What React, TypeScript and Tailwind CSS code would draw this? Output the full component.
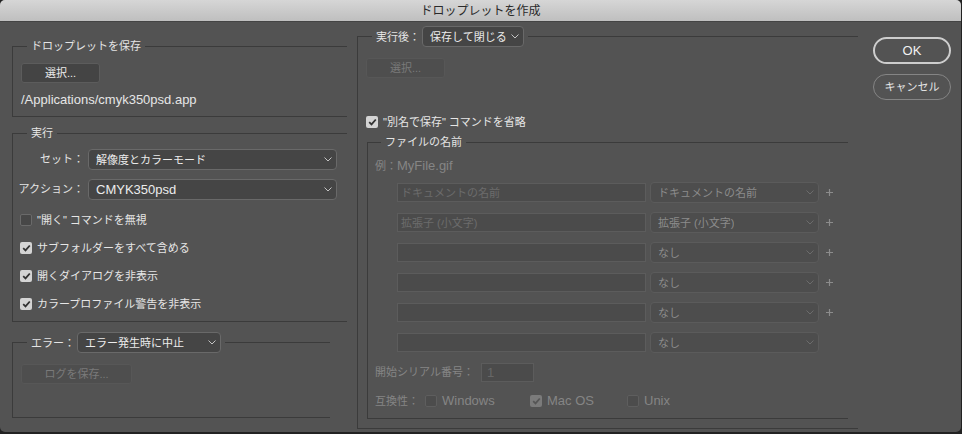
import type { ReactNode } from 'react';

// Latin text renders larger than the kana/kanji in this dialog
function L({ children }: { children: ReactNode }) {
  return <span className="text-[13px]">{children}</span>;
}

function Chevron({ dim }: { dim?: boolean }) {
  return (
    <svg width="8" height="5" viewBox="0 0 8 5" className={dim ? 'shrink-0 text-[#6c6c6c]' : 'shrink-0 text-[#c4c4c4]'}>
      <path d="M0.5 0.5L4 4L7.5 0.5" fill="none" stroke="currentColor" strokeWidth="1" />
    </svg>
  );
}

function Select({ children, className = '', dim }: { children: ReactNode; className?: string; dim?: boolean }) {
  return (
    <div
      className={`flex h-[21px] items-center justify-between gap-[4px] rounded-[4px] border pl-[7px] pr-[4px] leading-[16px] ${
        dim ? 'border-[#5b5b5b] bg-[#4d4d4d] text-[#8b8b8b]' : 'border-[#696969] bg-[#454545] text-[#ececec]'
      } ${className}`}
    >
      <span className="truncate whitespace-nowrap">{children}</span>
      <Chevron dim={dim} />
    </div>
  );
}

function Check({ checked, disabled }: { checked?: boolean; disabled?: boolean }) {
  let cls = 'border border-[#6a6a6a] bg-[#474747]';
  if (checked) cls = disabled ? 'bg-[#7b7b7b]' : 'bg-[#d4d4d4]';
  else if (disabled) cls = 'border border-[#5e5e5e] bg-[#4c4c4c]';
  return (
    <span className={`flex h-[12px] w-[12px] shrink-0 items-center justify-center rounded-[2px] ${cls}`}>
      {checked && (
        <svg width="9" height="8" viewBox="0 0 9 8">
          <path d="M1.2 4.2L3.5 6.4L7.8 1.5" fill="none" stroke={disabled ? '#565656' : '#333333'} strokeWidth="1.8" />
        </svg>
      )}
    </span>
  );
}

function CheckRow({ label, checked, disabled, className = '' }: { label: ReactNode; checked?: boolean; disabled?: boolean; className?: string }) {
  return (
    <div className={`flex h-[16px] items-center gap-[5px] whitespace-nowrap leading-[16px] ${disabled ? 'text-[#858585]' : 'text-[#e6e6e6]'} ${className}`}>
      <Check checked={checked} disabled={disabled} />
      <span>{label}</span>
    </div>
  );
}

function Group({ legend, className = '', legendClass = 'ml-[14px]', children }: { legend: ReactNode; className?: string; legendClass?: string; children: ReactNode }) {
  return (
    <fieldset className={`border-y border-l border-r-0 border-[#3b3b3b] ${className}`}>
      <legend className={`flex items-center whitespace-nowrap px-[4px] leading-[16px] text-[#e4e4e4] ${legendClass}`}>{legend}</legend>
      {children}
    </fieldset>
  );
}

function Button({ children, disabled, className = '' }: { children: ReactNode; disabled?: boolean; className?: string }) {
  return (
    <div
      className={`flex h-[20px] items-center justify-center rounded-[3px] border leading-[16px] ${
        disabled ? 'border-[#575757] bg-[#4e4e4e] text-[#7a7a7a]' : 'border-[#5c5c5c] bg-[#444444] text-[#ececec]'
      } ${className}`}
    >
      {children}
    </div>
  );
}

function Plus() {
  return (
    <svg width="7" height="7" viewBox="0 0 7 7" className="ml-[7px] text-[#8c8c8c]">
      <path d="M3.5 0V7M0 3.5H7" stroke="currentColor" strokeWidth="1.2" />
    </svg>
  );
}

const nameRows = [
  { input: 'ドキュメントの名前', select: 'ドキュメントの名前', plus: true },
  { input: '拡張子 (小文字)', select: '拡張子 (小文字)', plus: true },
  { input: '', select: 'なし', plus: true },
  { input: '', select: 'なし', plus: true },
  { input: '', select: 'なし', plus: true },
  { input: '', select: 'なし', plus: false },
];

export default function App() {
  return (
    <div className="h-[434px] w-[962px] bg-[#222222] font-['Liberation_Sans','Noto_Sans_CJK_JP',sans-serif] text-[11px]">
      <div className="flex h-[432px] w-[961px] flex-col overflow-hidden rounded-[5px] bg-[#535353]">
        <div className="flex h-[22px] shrink-0 items-center justify-center border-b border-[#444444] bg-gradient-to-b from-[#d6d6d6] to-[#bfbfbf] text-[12px] text-[#2a2a2a]">
          ドロップレットを作成
        </div>

        <div className="flex">
          {/* left column */}
          <div className="ml-[12px] w-[335px] shrink-0">
            <Group legend="ドロップレットを保存" className="mt-[16px]">
              <div className="pb-[8px] pl-[8px] pt-[9px]">
                <Button className="w-[79px]">選択...</Button>
                <div className="mt-[9px] leading-[16px] text-[#e6e6e6]">
                  <L>/Applications/cmyk350psd.app</L>
                </div>
              </div>
            </Group>

            <Group legend="実行" className="mt-[8px]">
              <div className="pb-[9px] pl-[5px] pr-[10px] pt-[8px]">
                <div className="flex items-center">
                  <span className="w-[66px] shrink-0 whitespace-nowrap text-right text-[#e4e4e4]">セット：</span>
                  <Select className="ml-[4px] flex-1">解像度とカラーモード</Select>
                </div>
                <div className="mt-[9px] flex items-center">
                  <span className="w-[66px] shrink-0 whitespace-nowrap text-right text-[#e4e4e4]">アクション：</span>
                  <Select className="ml-[4px] flex-1">
                    <L>CMYK350psd</L>
                  </Select>
                </div>
                <div className="mt-[12px] flex flex-col gap-[12px] pl-[2px]">
                  <CheckRow label={'"開く" コマンドを無視'} />
                  <CheckRow label="サブフォルダーをすべて含める" checked />
                  <CheckRow label="開くダイアログを非表示" checked />
                  <CheckRow label="カラープロファイル警告を非表示" checked />
                </div>
              </div>
            </Group>

            <Group
              className="mt-[10px] w-[318px]"
              legend={
                <>
                  <span className="mr-[2px]">エラー：</span>
                  <Select className="w-[144px]">エラー発生時に中止</Select>
                </>
              }
            >
              <div className="pb-[33px] pl-[8px] pt-[11px]">
                <Button disabled className="w-[111px]">
                  ログを保存...
                </Button>
              </div>
            </Group>
          </div>

          {/* right column */}
          <div className="ml-[10px] w-[501px] shrink-0">
            <Group
              className="mt-[4px]"
              legend={
                <>
                  <span className="mr-[2px]">実行後：</span>
                  <Select className="w-[102px]">保存して閉じる</Select>
                </>
              }
            >
              <div className="pb-[9px] pl-[8px] pr-[10px] pt-[11px]">
                <Button disabled className="w-[79px]">
                  選択...
                </Button>
                <CheckRow className="mt-[36px]" label={'"別名で保存" コマンドを省略'} checked />

                <Group legend="ファイルの名前" legendClass="ml-[13px]" className="ml-[1px] mt-[4px]">
                  <div className="pb-[8px] pl-[7px] pt-[8px] text-[#858585]">
                    <div className="leading-[16px]">
                      例：<L>MyFile.gif</L>
                    </div>
                    <div className="mt-[8px] flex flex-col gap-[9px] pl-[22px]">
                      {nameRows.map((row, i) => (
                        <div key={i} className="flex h-[21px] items-center">
                          <div className="flex h-[19px] w-[249px] items-center border border-[#5c5c5c] bg-[#4b4b4b] pl-[3px] leading-[16px] text-[#6c6c6c]">
                            {row.input}
                          </div>
                          <Select dim className="ml-[4px] w-[169px]">
                            {row.select}
                          </Select>
                          {row.plus && <Plus />}
                        </div>
                      ))}
                    </div>
                    <div className="mt-[10px] flex h-[19px] items-center">
                      <span className="w-[106px] whitespace-nowrap">開始シリアル番号：</span>
                      <div className="flex h-[19px] w-[53px] items-center border border-[#5c5c5c] bg-[#4b4b4b] pl-[5px] text-[#676767]">
                        <L>1</L>
                      </div>
                    </div>
                    <div className="mt-[10px] flex h-[18px] items-center">
                      <span className="w-[50px] whitespace-nowrap">互換性：</span>
                      <CheckRow disabled className="w-[105px]" label={<L>Windows</L>} />
                      <CheckRow disabled checked className="w-[97px]" label={<L>Mac OS</L>} />
                      <CheckRow disabled label={<L>Unix</L>} />
                    </div>
                  </div>
                </Group>
              </div>
            </Group>
          </div>

          {/* buttons */}
          <div className="ml-[15px] mt-[15px] flex w-[78px] shrink-0 flex-col gap-[10px]">
            <div className="flex h-[27px] items-center justify-center rounded-full border-2 border-[#cdcdcd] text-[#f2f2f2]">
              <L>OK</L>
            </div>
            <div className="flex h-[26px] items-center justify-center rounded-full border border-[#858585] text-[#e4e4e4]">
              キャンセル
            </div>
          </div>
        </div>
      </div>
    </div>
  );
}
